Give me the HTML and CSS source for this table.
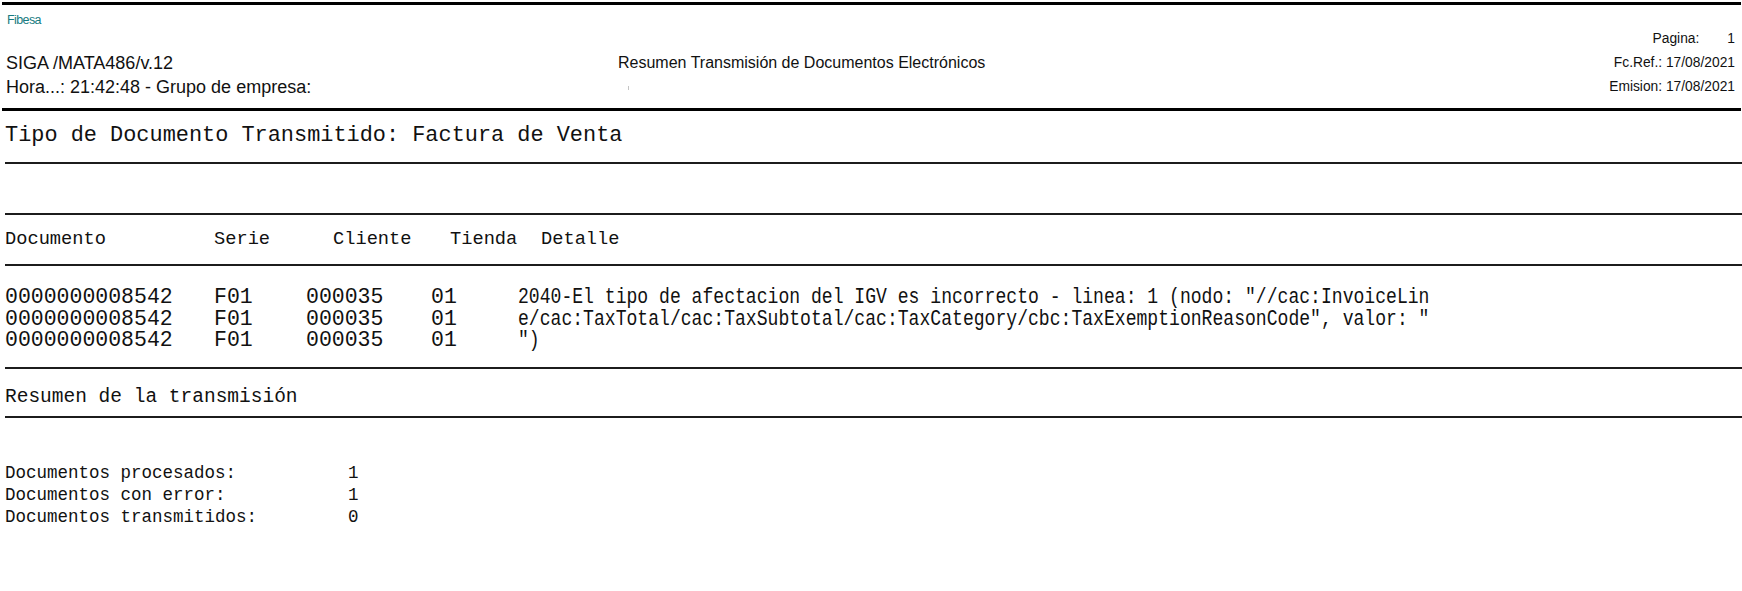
FILE: index.html
```html
<!DOCTYPE html>
<html lang="es">
<head>
<meta charset="utf-8">
<title>Resumen Transmisión de Documentos Electrónicos</title>
<link rel="stylesheet" href="styles.css">
</head>
<body>
<div class="report">
  <div class="rule thick top"></div>
  <div class="logo">Fibesa</div>
  <div class="head">
    <div class="head-left">
      <div class="hrow"></div>
      <div class="hrow">SIGA /MATA486/v.12</div>
      <div class="hrow">Hora...: 21:42:48 - Grupo de empresa:</div>
    </div>
    <div class="head-center">
      <div class="hrow"></div>
      <div class="hrow">Resumen Transmisión de Documentos Electrónicos</div>
      <div class="hrow"><span class="tick"></span></div>
    </div>
    <div class="head-right">
      <div class="hrow">Pagina:<span class="page-no">1</span></div>
      <div class="hrow">Fc.Ref.: 17/08/2021</div>
      <div class="hrow">Emision: 17/08/2021</div>
    </div>
  </div>
  <div class="rule thick mid"></div>

  <div class="mono title-line">Tipo de Documento Transmitido: Factura de Venta</div>
  <div class="rule thin r1"></div>
  <div class="rule thin r2"></div>

  <div class="mono col-head">
    <span>Documento</span><span>Serie</span><span>Cliente</span><span>Tienda</span><span>Detalle</span>
  </div>
  <div class="rule thin r3"></div>

  <div class="mono rows">
    <div class="row"><span>0000000008542</span><span>F01</span><span>000035</span><span>01</span><span class="detail">2040-El tipo de afectacion del IGV es incorrecto - linea: 1 (nodo: "//cac:InvoiceLin</span></div>
    <div class="row"><span>0000000008542</span><span>F01</span><span>000035</span><span>01</span><span class="detail">e/cac:TaxTotal/cac:TaxSubtotal/cac:TaxCategory/cbc:TaxExemptionReasonCode", valor: "</span></div>
    <div class="row"><span>0000000008542</span><span>F01</span><span>000035</span><span>01</span><span class="detail">")</span></div>
  </div>
  <div class="rule thin r4"></div>

  <div class="mono sum-title">Resumen de la transmisión</div>
  <div class="rule thin r5"></div>

  <div class="mono summary">
    <div class="sum-row"><span>Documentos procesados:</span><span>1</span></div>
    <div class="sum-row"><span>Documentos con error:</span><span>1</span></div>
    <div class="sum-row"><span>Documentos transmitidos:</span><span>0</span></div>
  </div>
</div>
</body>
</html>
```

FILE: styles.css
```css
html, body {
  margin: 0;
  padding: 0;
  background: #ffffff;
}

.report {
  width: 1742px;
  height: 591px;
  overflow: hidden;
  color: #000;
}

/* horizontal rules */
.rule {
  background: #000;
}

.rule.thick {
  height: 3px;
  margin: 0 1px 0 2px;
}

.rule.top {
  margin-top: 2px;
}

.rule.mid {
  margin-top: 9px;
}

.rule.thin {
  height: 2px;
  background: #1c1c1c;
  margin-left: 5px;
}

.rule.r1 { margin-top: 13px; }
.rule.r2 { margin-top: 49px; }
.rule.r3 { margin-top: 12px; }
.rule.r4 { margin-top: 15.5px; }
.rule.r5 { margin-top: 6px; }

/* page header */
.logo {
  margin: 8px 0 0 7px;
  height: 14px;
  line-height: 14px;
  font-family: "Liberation Sans", Arial, sans-serif;
  font-size: 12.5px;
  letter-spacing: -0.6px;
  color: #167b80;
}

.head {
  display: grid;
  grid-template-columns: 612px 1fr auto;
  padding: 0 7px 0 6px;
  font-family: "Liberation Sans", Arial, sans-serif;
  color: #111;
}

.hrow {
  height: 24px;
  line-height: 24px;
  white-space: nowrap;
}

.head-left {
  font-size: 18px;
}

.head-center {
  font-size: 16px;
}

.head-right {
  font-size: 13.8px;
  text-align: right;
}

.page-no {
  margin-left: 28px;
}

.tick {
  display: inline-block;
  width: 1px;
  height: 4px;
  margin-left: 10px;
  background: #c4c4c4;
  vertical-align: middle;
}

/* monospaced report body */
.mono {
  font-family: "Liberation Mono", "Courier New", monospace;
  white-space: nowrap;
  padding-left: 5px;
  color: #111;
}

.title-line {
  margin-top: 12px;
  height: 26px;
  line-height: 26px;
  font-size: 21.9px;
}

.col-head {
  display: grid;
  grid-template-columns: 209px 119px 117px 91px 1fr;
  margin-top: 11px;
  height: 26px;
  line-height: 26px;
  font-size: 18.7px;
}

.rows {
  margin-top: 21px;
  font-size: 21.5px;
}

.row {
  display: grid;
  grid-template-columns: 209px 92px 125px 87px 1fr;
  height: 21.5px;
  line-height: 21.5px;
}

.detail {
  display: inline-block;
  white-space: pre;
  transform: scaleX(0.841);
  transform-origin: left center;
}

.sum-title {
  margin-top: 15px;
  height: 26px;
  line-height: 26px;
  font-size: 19.5px;
}

.summary {
  margin-top: 44px;
  font-size: 17.5px;
}

.sum-row {
  display: grid;
  grid-template-columns: 343px 1fr;
  height: 22px;
  line-height: 22px;
}
```
